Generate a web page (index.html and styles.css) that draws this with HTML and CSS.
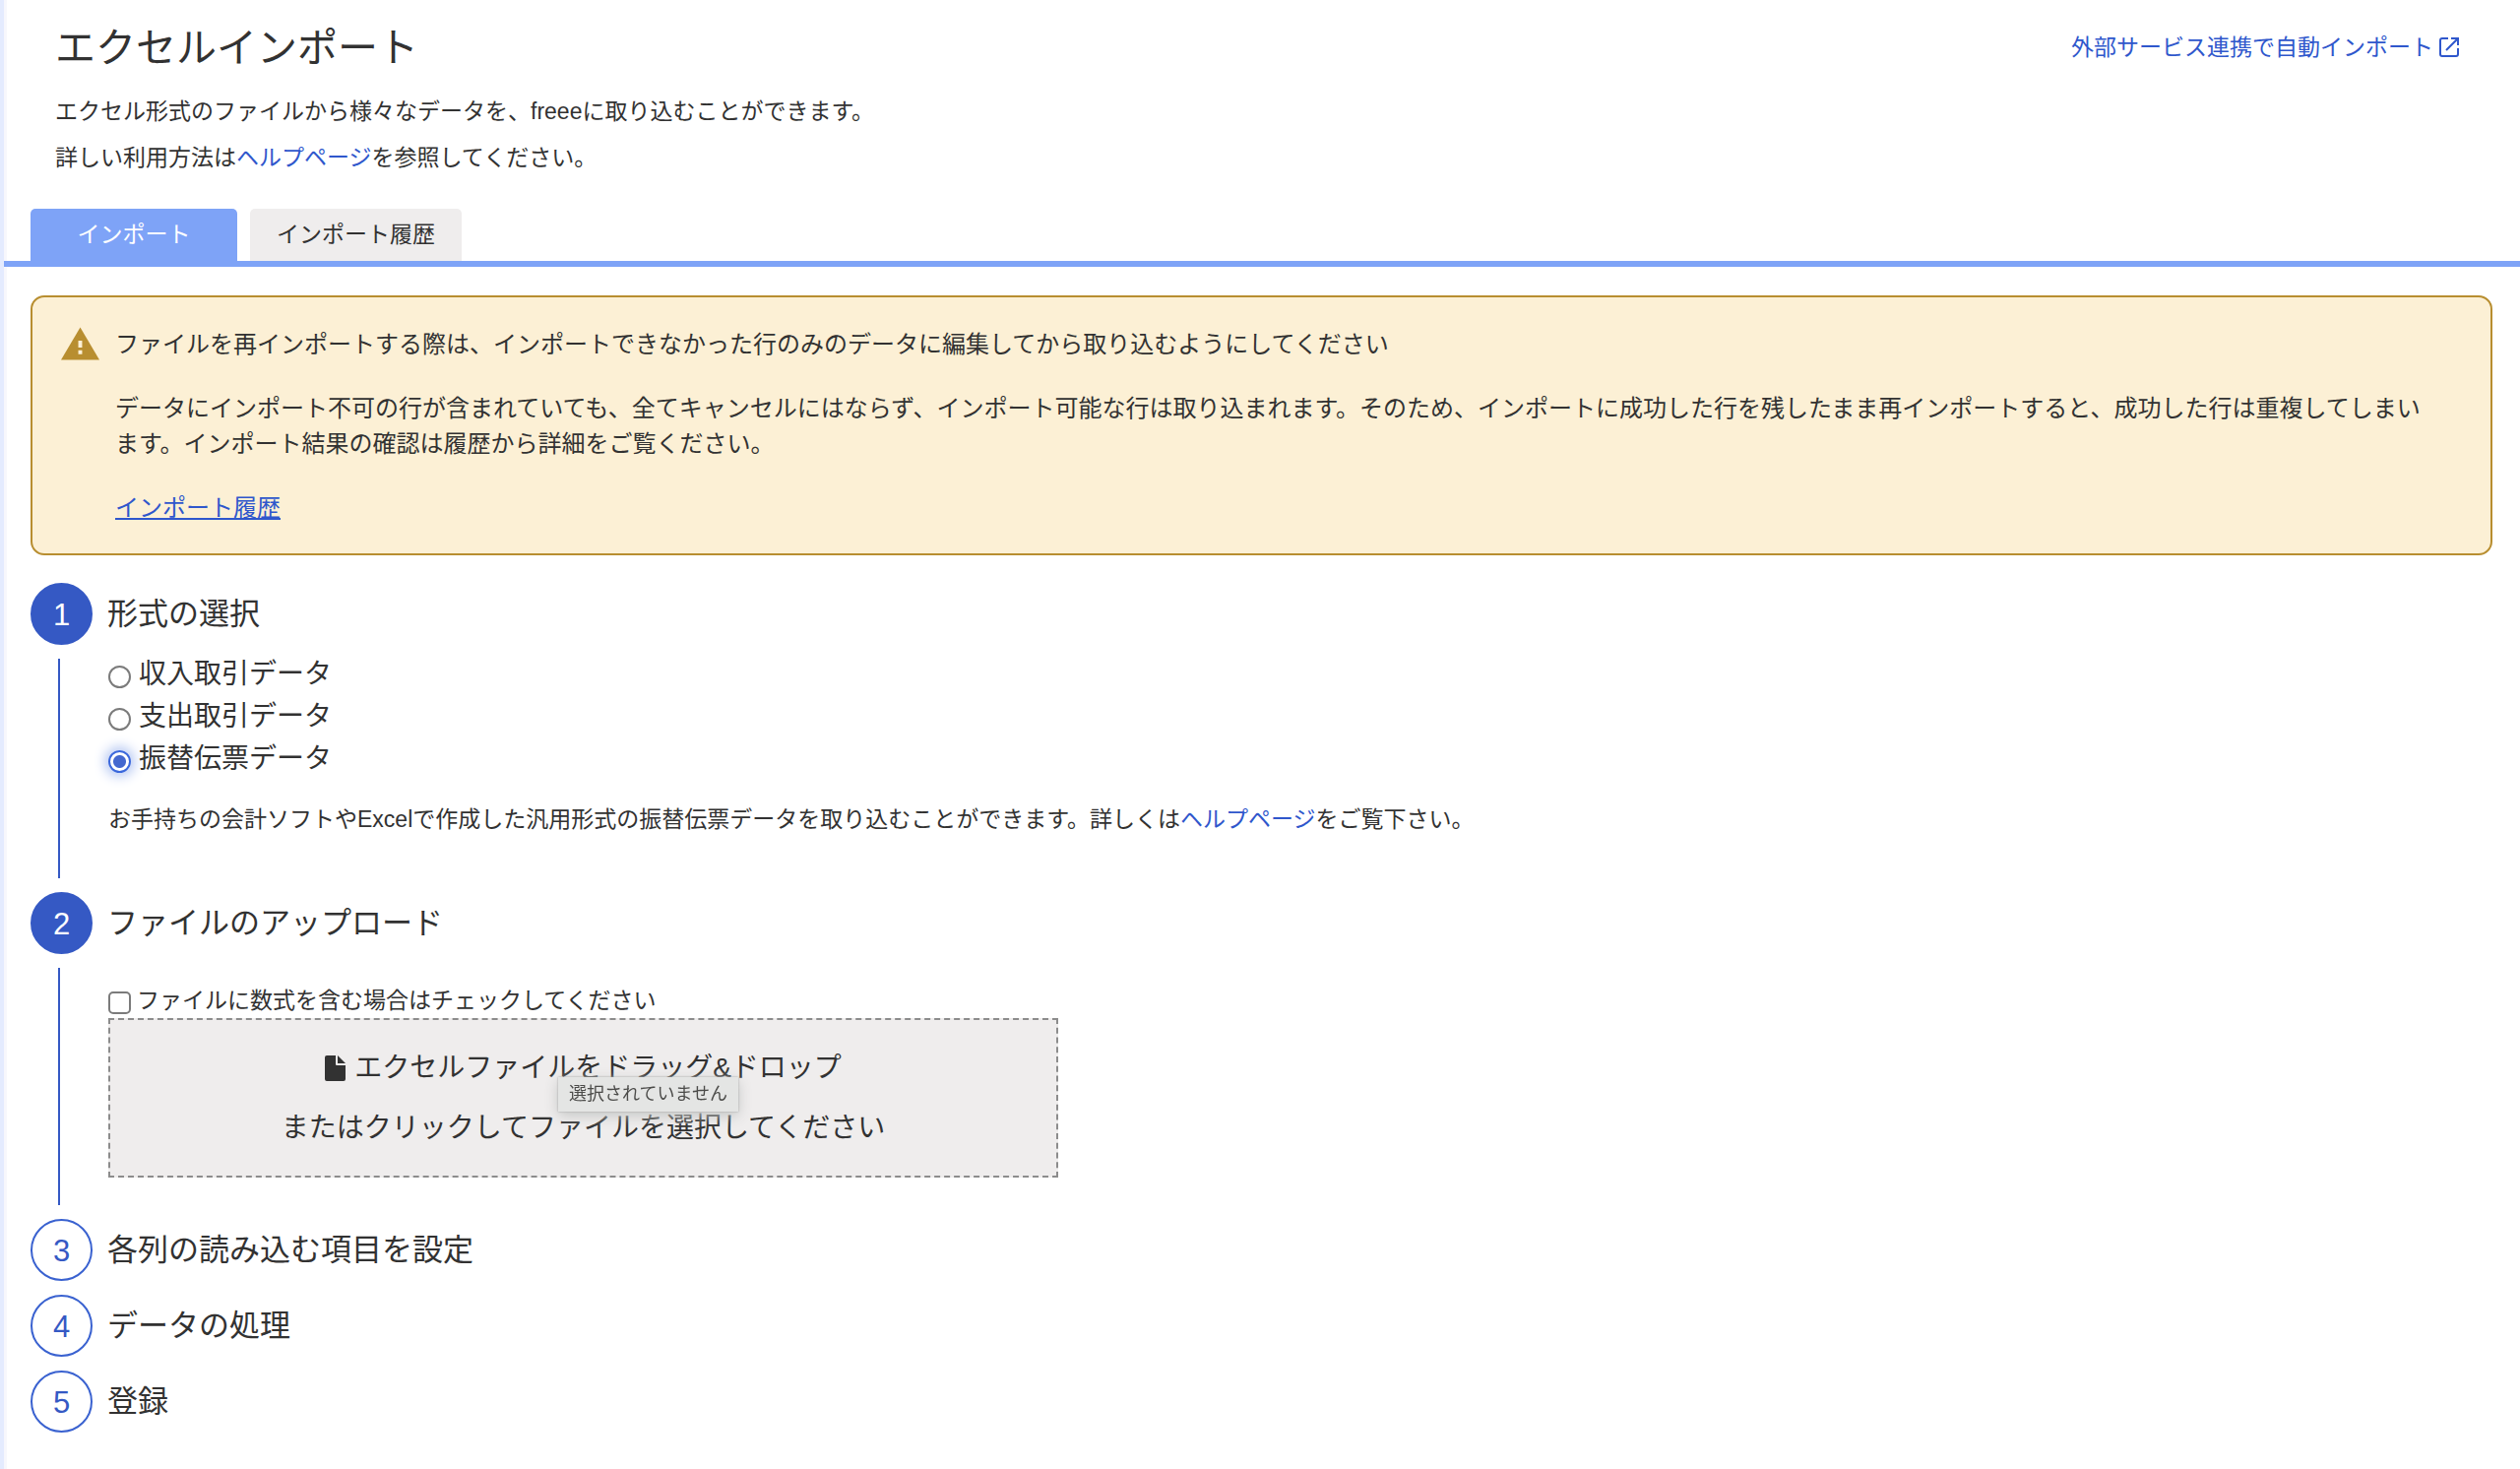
FILE: index.html
```html
<!DOCTYPE html>
<html lang="ja">
<head>
<meta charset="utf-8">
<meta name="viewport" content="width=device-width, initial-scale=1">
<title>エクセルインポート</title>
<link rel="stylesheet" href="styles.css">
</head>
<body>
<div class="page">
  <header class="page-header">
    <div class="intro">
      <h1 class="page-title">エクセルインポート</h1>
      <p class="lead">エクセル形式のファイルから様々なデータを、freeeに取り込むことができます。</p>
      <p class="lead">詳しい利用方法は<a href="#help">ヘルプページ</a>を参照してください。</p>
    </div>
    <a class="external-link" href="#external">外部サービス連携で自動インポート
      <svg class="external-icon" viewBox="0 0 20 20" fill="none" stroke="currentColor" stroke-width="2" aria-hidden="true"><path d="M9 1H3Q1 1 1 3V17Q1 19 3 19H17Q19 19 19 17V11M12 1H19V8M19 1L7 13"/></svg>
    </a>
  </header>

  <nav class="tabs">
    <a class="tab tab-active" href="#import" aria-current="page">インポート</a>
    <a class="tab" href="#history">インポート履歴</a>
  </nav>

  <main class="content">
    <section class="alert">
      <svg class="alert-icon" viewBox="0 0 40 34" aria-hidden="true"><path fill="#b88e30" d="M20 0L40 34H0Z"/><path fill="#fcf0d5" d="M18 14h4v7h-4zM18 24h4v4h-4z"/></svg>
      <div class="alert-body">
        <p>ファイルを再インポートする際は、インポートできなかった行のみのデータに編集してから取り込むようにしてください</p>
        <p>データにインポート不可の行が含まれていても、全てキャンセルにはならず、インポート可能な行は取り込まれます。そのため、インポートに成功した行を残したまま再インポートすると、成功した行は重複してしまいます。インポート結果の確認は履歴から詳細をご覧ください。</p>
        <a class="alert-link" href="#history">インポート履歴</a>
      </div>
    </section>

    <ol class="steps">
      <li class="step step-done">
        <div class="rail"><span class="number">1</span></div>
        <div class="step-body">
          <h2 class="step-title">形式の選択</h2>
          <div class="radios">
            <label class="radio"><input type="radio" name="format">収入取引データ</label>
            <label class="radio"><input type="radio" name="format">支出取引データ</label>
            <label class="radio"><input type="radio" name="format" checked>振替伝票データ</label>
          </div>
          <p class="note">お手持ちの会計ソフトやExcelで作成した汎用形式の振替伝票データを取り込むことができます。詳しくは<a href="#help">ヘルプページ</a>をご覧下さい。</p>
        </div>
      </li>
      <li class="step step-done">
        <div class="rail"><span class="number">2</span></div>
        <div class="step-body">
          <h2 class="step-title">ファイルのアップロード</h2>
          <label class="check"><input type="checkbox">ファイルに数式を含む場合はチェックしてください</label>
          <label class="dropzone">
            <input class="file-input" type="file">
            <span class="drop-line"><svg class="file-icon" viewBox="0 0 21 26" fill="currentColor" aria-hidden="true"><path d="M2 0H11V9Q11 10 12 10H21V24Q21 26 19 26H2Q0 26 0 24V2Q0 0 2 0ZM13 0L21 8H13Z"/></svg>エクセルファイルをドラッグ&amp;ドロップ</span>
            <span class="drop-line">またはクリックしてファイルを選択してください</span>
            <span class="tooltip" role="tooltip">選択されていません</span>
          </label>
        </div>
      </li>
      <li class="step">
        <div class="rail"><span class="number">3</span></div>
        <h2 class="step-title">各列の読み込む項目を設定</h2>
      </li>
      <li class="step">
        <div class="rail"><span class="number">4</span></div>
        <h2 class="step-title">データの処理</h2>
      </li>
      <li class="step">
        <div class="rail"><span class="number">5</span></div>
        <h2 class="step-title">登録</h2>
      </li>
    </ol>
  </main>
</div>
</body>
</html>
```

FILE: styles.css
```css
* {
  box-sizing: border-box;
}

body {
  margin: 0;
  color: #323232;
  background: #fff;
  font-family: "Liberation Sans", "Noto Sans CJK JP", sans-serif;
  font-size: 23px;
  border-left: 4px solid #e4ebfe;
}

h1, h2, p, ol {
  margin: 0;
  padding: 0;
  font-weight: 400;
}

a {
  color: #2f57cc;
  text-decoration: none;
}

.page {
  min-height: 100vh;
  box-shadow: inset 3px 0 #f7f7fc;
}

.page-header {
  display: flex;
  justify-content: space-between;
  align-items: flex-start;
  padding: 19px 62px 28px 52px;
}

.page-title {
  font-size: 41px;
  line-height: 60px;
  margin-bottom: 11px;
}

.lead {
  line-height: 47px;
}

.external-link {
  display: flex;
  align-items: center;
  gap: 6px;
  line-height: 58px;
}

.external-icon {
  width: 20px;
  height: 20px;
}

.tabs {
  display: flex;
  gap: 13px;
  padding-left: 27px;
  border-bottom: 6px solid #7ea3f7;
}

.tab {
  min-width: 210px;
  padding: 0 27px;
  line-height: 53px;
  text-align: center;
  color: #323232;
  background: #efeded;
  border-radius: 5px 5px 0 0;
}

.tab-active {
  color: #fff;
  background: #7ea3f7;
}

.content {
  padding: 29px 28px 32px 27px;
}

.alert {
  display: flex;
  gap: 16px;
  padding: 30px 50px 28px 29px;
  font-size: 24px;
  line-height: 36px;
  background: #fcf0d5;
  border: 2px solid #b88e30;
  border-radius: 14px;
}

.alert-icon {
  flex: none;
  width: 39px;
  height: 34px;
}

.alert-body p {
  margin-bottom: 29px;
}

.alert-link {
  text-decoration: underline;
}

.steps {
  display: flex;
  flex-direction: column;
  gap: 14px;
  margin-top: 28px;
  list-style: none;
}

.step {
  display: flex;
  gap: 15px;
}

.rail {
  flex: none;
  display: flex;
  flex-direction: column;
  gap: 14px;
  width: 63px;
}

.number {
  width: 63px;
  height: 63px;
  border: 2px solid #3a62d0;
  border-radius: 50%;
  font-size: 31px;
  line-height: 61px;
  text-align: center;
  color: #3559c4;
}

.step-done .number {
  color: #fff;
  background: #3559c4;
  border-color: #3559c4;
}

.step-done .rail::after {
  content: "";
  flex: 1;
  width: 2px;
  margin-left: 28px;
  background: #3559c4;
}

.step-title {
  font-size: 31px;
  line-height: 63px;
}

.radios {
  padding-top: 8px;
}

.radio {
  display: flex;
  align-items: center;
  gap: 8px;
  width: max-content;
  font-size: 28px;
  line-height: 43px;
}

input[type="radio"],
input[type="checkbox"] {
  appearance: none;
  flex: none;
  width: 23px;
  height: 23px;
  margin: 6px 0 0 1px;
  border: 2px solid #7b7b7b;
  border-radius: 50%;
  background: #fff;
}

input[type="checkbox"] {
  margin-top: 4px;
  border-radius: 5px;
}

input[type="radio"]:checked {
  border-color: #3b68dc;
  background: radial-gradient(circle, #4468cf 6px, #fff 7px);
  box-shadow: 0 0 12px 4px #b9caf3;
}

.note {
  padding: 17px 0 37px 1px;
  line-height: 46px;
}

.check {
  display: flex;
  align-items: center;
  gap: 6px;
  width: max-content;
  padding-top: 29px;
  line-height: 36px;
}

.dropzone {
  position: relative;
  display: flex;
  flex-direction: column;
  width: 965px;
  max-width: 100%;
  margin: 0 0 28px 1px;
  padding: 18px 0;
  background: #efeded;
  border: 2px dashed #8c8c8c;
}

.file-input {
  position: absolute;
  inset: 0;
  width: 100%;
  height: 100%;
  opacity: 0;
}

.drop-line {
  display: flex;
  justify-content: center;
  align-items: center;
  gap: 9px;
  font-size: 28px;
  line-height: 61px;
}

.file-icon {
  width: 21px;
  height: 26px;
}

.tooltip {
  position: absolute;
  top: 58px;
  left: 455px;
  padding: 0 11px;
  font-size: 18px;
  line-height: 35px;
  color: #4c4c4a;
  background: #e4e5e4;
  box-shadow: 0 0 2px #a5a5a5, 0 4px 14px #c4c6c5;
}
```
